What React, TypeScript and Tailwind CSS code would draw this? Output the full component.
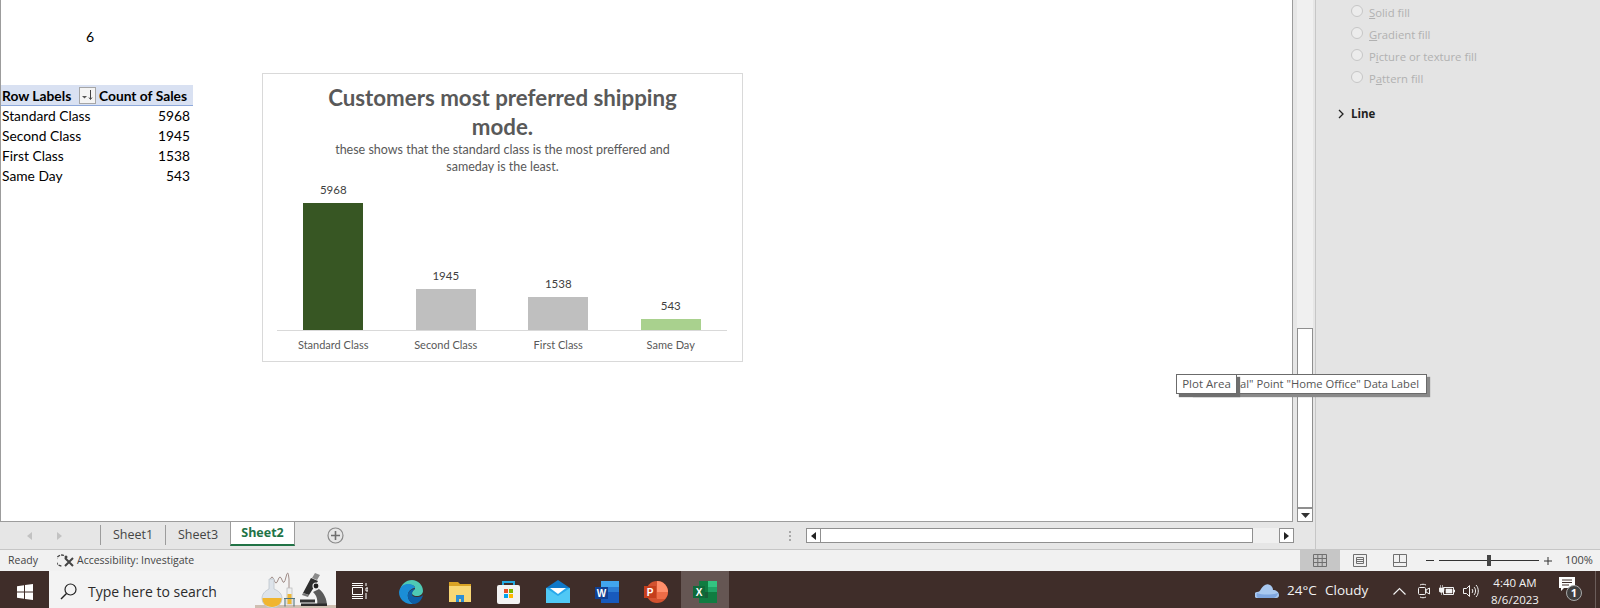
import React from "react";

const cell = "font-['Lato',sans-serif]";
const seg = "font-['Open_Sans',sans-serif]";

const rows: [string, string][] = [
  ["Standard Class", "5968"],
  ["Second Class", "1945"],
  ["First Class", "1538"],
  ["Same Day", "543"],
];

const bars = [
  { label: "Standard Class", value: "5968", h: "h-[127px]", c: "bg-[#375623]" },
  { label: "Second Class", value: "1945", h: "h-[41px]", c: "bg-[#bfbfbf]" },
  { label: "First Class", value: "1538", h: "h-[33px]", c: "bg-[#bfbfbf]" },
  { label: "Same Day", value: "543", h: "h-[11px]", c: "bg-[#a9d18e]" },
];

function PivotTable() {
  return (
    <div className={`${cell} w-[192px] whitespace-nowrap text-[13.800px] leading-[20px] text-black`}>
      <div className="flex h-[21px] items-center justify-between border-b border-[#8ea9db] bg-[#d9e1f2] pl-[1px] pr-[6px] pt-[1px] font-bold">
        <span>Row Labels</span>
        <span className="flex items-center gap-[3px]">
          <span className="-mt-[1px] flex h-[17px] w-[17px] items-center justify-center border border-[#a6a6a6] bg-[#f4f4f4]">
            <svg width="13" height="11" viewBox="0 0 13 11">
              <path d="M1 6h5l-2.500 2.500z" fill="#555" />
              <path d="M9.500 0v9M8 7.500l1.500 2 1.500-2" stroke="#444" fill="none" />
            </svg>
          </span>
          <span>Count of Sales</span>
        </span>
      </div>
      {rows.map(([a, b]) => (
        <div key={a} className="flex h-[20px] items-center justify-between pl-[1px] pr-[3px]">
          <span>{a}</span>
          <span>{b}</span>
        </div>
      ))}
    </div>
  );
}

function Chart() {
  return (
    <div className={`${cell} ml-[69px] mt-[36px] flex h-[289px] w-[481px] flex-col border border-[#d9d9d9] bg-white text-[#595959]`}>
      <div className="mt-[9px] px-[50px] text-center text-[22.300px] font-bold leading-[29px] text-[#595959]">
        Customers most preferred shipping mode.
      </div>
      <div className="px-[60px] text-center text-[12.500px] leading-[17px]">
        these shows that the standard class is the most preffered and sameday is the least.
      </div>
      <div className="ml-[14px] mr-[15px] mt-[10px] flex h-[146px] items-end border-b border-[#d9d9d9]">
        {bars.map((b) => (
          <div key={b.label} className="flex flex-1 flex-col items-center">
            <span className="mb-[6px] text-[11.500px] leading-[14px] text-[#404040]">{b.value}</span>
            <div className={`w-[60px] ${b.h} ${b.c}`} />
          </div>
        ))}
      </div>
      <div className="ml-[14px] mr-[15px] mt-[6px] flex">
        {bars.map((b) => (
          <div key={b.label} className="flex-1 text-center text-[11px] leading-[16px]">
            {b.label}
          </div>
        ))}
      </div>
    </div>
  );
}

function Radio({ label, u, pre = "" }: { label: string; u: string; pre?: string }) {
  return (
    <div className="flex h-[22px] items-center">
      <span className="-mt-[4px] h-[12px] w-[12px] rounded-full border border-[#c6c6c6] bg-[#ececec]" />
      <span className="ml-[6px] text-[11.300px] text-[#b1b1b1]">
        {pre}
        <span className="underline">{u}</span>
        {label}
      </span>
    </div>
  );
}

function Pane() {
  return (
    <div className={`${seg} w-[284px] shrink-0 bg-[#e4e4e4] pl-[35px]`}>
      <div className="pt-[2px]">
        <Radio u="S" label="olid fill" />
        <Radio u="G" label="radient fill" />
        <Radio pre="P" u="i" label="cture or texture fill" />
        <Radio pre="P" u="a" label="ttern fill" />
      </div>
      <div className="-ml-[13px] mt-[14px] flex h-[20px] items-center gap-[6px] text-[11.500px] font-bold text-[#1f1f1f]">
        <svg width="7" height="10" viewBox="0 0 7 10">
          <path d="M1 1l4 4-4 4" stroke="#222" strokeWidth="1.300" fill="none" />
        </svg>
        Line
      </div>
    </div>
  );
}

function ScrollV() {
  return (
    <div className="flex w-[23px] shrink-0 flex-col border-r border-[#c6c6c6] bg-[#e6e6e6] pl-[4px]">
      <div className="flex h-full w-[16px] flex-col bg-[#f0f0f0]">
        <div className="h-[328px]" />
        <div className="h-[180px] border border-[#8f8f8f] bg-white" />
        <div className="flex h-[14px] items-center justify-center border border-[#8f8f8f] bg-white">
          <svg width="9" height="5" viewBox="0 0 9 5"><path d="M0 0h9L4.500 5z" fill="#333" /></svg>
        </div>
      </div>
    </div>
  );
}

function TabBar() {
  return (
    <div className={`${seg} flex h-[27px] shrink-0 items-center border-r border-[#c6c6c6] bg-[#e6e6e6]`}>
      <div className="flex w-[100px] shrink-0 items-center gap-[25px] pl-[27px]">
        <svg width="5" height="8" viewBox="0 0 5 8"><path d="M5 0v8L0 4z" fill="#c2c2c2" /></svg>
        <svg width="5" height="8" viewBox="0 0 5 8"><path d="M0 0v8l5-4z" fill="#c2c2c2" /></svg>
      </div>
      <div className="flex h-full items-stretch text-[12.500px] text-[#444]">
        <div className="mb-[4px] mt-[3px] flex w-[65px] items-center justify-center border-l border-[#9c9c9c]">Sheet1</div>
        <div className="mb-[4px] mt-[3px] flex w-[65px] items-center justify-center border-l border-[#9c9c9c]">Sheet3</div>
        <div className="mb-[3px] flex w-[65px] items-center justify-center border-x border-b-2 border-x-[#9c9c9c] border-b-[#217346] bg-white font-bold text-[#217346]">
          Sheet2
        </div>
      </div>
      <svg className="ml-[32px]" width="17" height="17" viewBox="0 0 17 17">
        <circle cx="8.500" cy="8.500" r="7.500" fill="none" stroke="#8a8a8a" strokeWidth="1.200" />
        <path d="M8.500 4v9M4 8.500h9" stroke="#6e6e6e" strokeWidth="1.600" />
      </svg>
      <div className="ml-[445px] flex h-[10px] w-[2px] flex-col justify-between">
        <span className="h-[2px] bg-[#a8a8a8]" /><span className="h-[2px] bg-[#a8a8a8]" /><span className="h-[2px] bg-[#a8a8a8]" />
      </div>
      <div className="ml-[15px] flex h-[15px] w-[488px] items-stretch bg-[#f0f0f0]">
        <div className="flex w-[15px] items-center justify-center border border-[#8f8f8f] bg-white">
          <svg width="5" height="8" viewBox="0 0 5 8"><path d="M5 0v8L0 4z" fill="#222" /></svg>
        </div>
        <div className="w-[432px] border-y border-r border-[#8f8f8f] bg-white" />
        <div className="flex-1" />
        <div className="flex w-[15px] items-center justify-center border border-[#8f8f8f] bg-white">
          <svg width="5" height="8" viewBox="0 0 5 8"><path d="M0 0v8l5-4z" fill="#222" /></svg>
        </div>
      </div>
    </div>
  );
}

function StatusBar() {
  return (
    <div className={`${seg} flex h-[22px] shrink-0 items-center border-t border-[#c6c6c6] bg-[#f1f1f1] text-[10.500px] text-[#444]`}>
      <span className="ml-[8px] w-[49px]">Ready</span>
      <svg width="18" height="16" viewBox="0 0 18 16">
        <path d="M7 2.500A5.500 5.500 0 1 0 4.500 13" fill="none" stroke="#444" strokeWidth="1.300" strokeDasharray="3 1" />
        <path d="M8 5l8 8M16 5l-8 8" stroke="#444" strokeWidth="2" />
        <circle cx="9" cy="4" r="1.500" fill="#444" />
      </svg>
      <span className="ml-[2px]">Accessibility: Investigate</span>
      <div className="ml-auto flex h-full items-stretch">
        <div className="flex w-[40px] items-center justify-center bg-[#c6c6c6]">
          <svg width="14" height="13" viewBox="0 0 14 13">
            <path d="M.5.500h13v12H.5zM.5 4.500h13M.5 8.500h13M4.800.500v12M9.200.500v12" fill="none" stroke="#6f6f6f" />
          </svg>
        </div>
        <div className="flex w-[40px] items-center justify-center">
          <svg width="14" height="13" viewBox="0 0 14 13">
            <path d="M.5.500h13v12H.5zM3.500 3.500h7v6h-7zM3.500 5.500h7M3.500 7.500h7" fill="none" stroke="#6f6f6f" />
          </svg>
        </div>
        <div className="flex w-[40px] items-center justify-center">
          <svg width="14" height="13" viewBox="0 0 14 13">
            <path d="M.5.500h13v12H.5zM.5 8.500h6V.500M6.500 8.500h7" fill="none" stroke="#6f6f6f" />
          </svg>
        </div>
      </div>
      <div className="ml-[6px] h-[1px] w-[8px] bg-[#333]" />
      <div className="relative ml-[5px] h-[1px] w-[100px] bg-[#333]">
        <div className="absolute -top-[5px] left-[48px] h-[11px] w-[4px] bg-[#444]" />
      </div>
      <svg className="ml-[5px]" width="8" height="8" viewBox="0 0 8 8"><path d="M0 4h8M4 0v8" stroke="#333" /></svg>
      <span className="ml-[13px] mr-[8px] w-[27px] text-[11px]">100%</span>
    </div>
  );
}

function Flask() {
  return (
    <svg width="81" height="37" viewBox="0 1 81 37">
      <rect x="0" y="35" width="81" height="3" fill="#cfbfb2" />
      <path d="M15 10q2-6 4 0t4 0 4 0 4-3 3 2v10" fill="none" stroke="#a08d88" strokeWidth="1" />
      <path d="M14 9h5v10c5 2 8 5 8 9.500a10 9.500 0 0 1-20 0c0-4.500 3-7.500 7-9.500z" fill="#dde3ea" stroke="#bcc4cc" strokeWidth="0.800" />
      <path d="M7.500 28h19c.5 5-3.500 9-9.500 9s-10-4-9.500-9z" fill="#f0b52f" />
      <rect x="32" y="18" width="5" height="16" fill="#eef0f1" stroke="#b8b8b8" strokeWidth="0.700" />
      <rect x="32.500" y="24" width="4" height="10" fill="#eeb735" />
      <path d="M29 28.500h11M30 28.500v8M39 28.500v8" stroke="#54757c" strokeWidth="1.100" fill="none" />
      <path d="M60 3l5 2-3 5-5-2z" fill="#8a8a8a" />
      <path d="M56 8l7 3-9 14-6-2z" fill="#2e2e2e" />
      <path d="M48 23l6 2-1 2-6-2z" fill="#777" />
      <path d="M64 19c5 4 8 10 8 17h-10c1-6 0-10-4-14z" fill="#5a5a5a" />
      <circle cx="61" cy="16" r="3" fill="#1f1f1f" stroke="#e8e8e8" strokeWidth="1.200" />
      <rect x="45" y="29.500" width="15" height="3" fill="#333" />
      <rect x="46" y="33.500" width="26" height="2.500" fill="#2b2b2b" />
    </svg>
  );
}

function TaskIcons() {
  return (
    <div className="flex h-full shrink-0 items-center">
      <div className="flex w-[47px] justify-center pt-[3px]">
        <svg width="16" height="16" viewBox="0 0 16 16">
          <path d="M0 .500h11M0 15.500h11M.500 4.500h10v7H.500zM14 0v3M14 5h2v3h-2zM14 10v6M0 2.500h11M0 13.500h11" fill="none" stroke="#fff" strokeWidth="1" />
        </svg>
      </div>
      <div className="ml-[16px] flex items-center gap-[25px] pt-[4px]">
        <svg width="24" height="24" viewBox="0 0 24 24">
          <path d="M1 11C2 4 7 0 13 0c6 0 11 5 11 11 0 3-3 5-6 5-4 0-5-2-5-3 0-3 3-3 3-5 0-2-3-4-7-3-5 1-8 3-8 6z" fill="#4fc9b4" />
          <path d="M0 12C1 6 5 4 9 4c4 0 7 2 7 4-1 0-6 1-7 6-1 4 2 9 6 10-8 1-15-4-15-12z" fill="#1b8ed6" />
          <path d="M9 14c1-4 5-5 7-5-2 2-3 3-3 5 0 3 4 3 6 3 2 0 4-1 5-2-1 5-5 9-9 9-4-1-7-6-6-10z" fill="#0d5fa8" />
        </svg>
        <svg className="ml-[1px]" width="22" height="22" viewBox="0 0 22 22">
          <path d="M0 1h9l2 2h11v18H0z" fill="#d9a224" />
          <path d="M0 5h22v16H0z" fill="#f8d775" />
          <path d="M7 21v-7h8v7h-3v-3h-2v3z" fill="#2c8ed6" />
        </svg>
        <svg className="ml-[1px]" width="23" height="24" viewBox="0 0 23 24">
          <path d="M6 6V2h11v4" fill="none" stroke="#24a9e0" strokeWidth="2" />
          <rect y="5" width="23" height="19" rx="2" fill="#f3f3f3" />
          <rect x="7" y="9" width="4" height="4" fill="#e8502a" />
          <rect x="12" y="9" width="4" height="4" fill="#7fba00" />
          <rect x="7" y="14" width="4" height="4" fill="#00a4ef" />
          <rect x="12" y="14" width="4" height="4" fill="#ffb900" />
        </svg>
        <svg className="ml-[1px]" width="24" height="23" viewBox="0 0 24 23">
          <path d="M0 8l12-8 12 8v15H0z" fill="#0f78c8" />
          <path d="M0 8h24v15H0z" fill="#28a8ea" />
          <path d="M4 8h16l-8 6z" fill="#fff" />
          <path d="M0 8l12 8 12-8v15H0z" fill="#50c8f5" />
        </svg>
        <svg width="24" height="22" viewBox="0 0 24 22">
          <rect x="6" width="18" height="22" fill="#185abd" />
          <rect x="6" width="18" height="6" fill="#41a5ee" />
          <rect x="6" y="6" width="18" height="5" fill="#2b7cd3" />
          <rect y="6" width="13" height="12" fill="#103f91" />
          <text x="6.500" y="16" textAnchor="middle" fontSize="10" fontWeight="700" fill="#fff" fontFamily="Liberation Sans">W</text>
        </svg>
        <svg width="24" height="22" viewBox="0 0 24 22">
          <circle cx="13" cy="11" r="11" fill="#d35230" />
          <path d="M13 0a11 11 0 0 1 11 11H13z" fill="#ff8f6b" />
          <path d="M13 11h11a11 11 0 0 1-3 7H13z" fill="#ed6c47" />
          <rect y="5" width="12" height="12" fill="#c43e1c" />
          <text x="6" y="15" textAnchor="middle" fontSize="10" fontWeight="700" fill="#fff" fontFamily="Liberation Sans">P</text>
        </svg>
      </div>
      <div className="ml-[13px] flex h-full w-[48px] items-center justify-center bg-[#655653] pt-[4px]">
        <svg width="24" height="22" viewBox="0 0 24 22">
          <rect x="6" width="18" height="22" fill="#107c41" />
          <rect x="15" width="9" height="6" fill="#33c481" />
          <rect x="15" y="6" width="9" height="5" fill="#21a366" />
          <rect x="6" y="11" width="9" height="6" fill="#185c37" />
          <rect y="5" width="12" height="12" fill="#0f6a3a" />
          <text x="6" y="15" textAnchor="middle" fontSize="10" fontWeight="700" fill="#fff" fontFamily="Liberation Sans">X</text>
        </svg>
      </div>
    </div>
  );
}

function Tray() {
  return (
    <div className="ml-auto flex h-full shrink-0 items-center whitespace-nowrap pt-[2px] text-[#f2f2f2]">
      <svg width="24" height="15" viewBox="0 0 24 15">
        <path d="M3 15a3 3 0 0 1-1-6c2 0 3-1 4-3 2-3 5-6 9-4 2 1 3 3 3 5 3 0 6 2 6 5s-2 3-4 3z" fill="#a9c8f0" />
        <path d="M2 10c5 2 15 2 21 0-1 4-3 5-5 5H4c-2 0-3-2-2-5z" fill="#7fa6e0" />
      </svg>
      <span className="ml-[8px] w-[38px] text-[13.500px]">24°C</span>
      <span className="w-[43px] text-[13.500px]">Cloudy</span>
      <svg className="ml-[25px]" width="13" height="8" viewBox="0 0 13 8"><path d="M.500 7.500l6-6 6 6" stroke="#f2f2f2" strokeWidth="1.200" fill="none" /></svg>
      <svg className="ml-[12px]" width="12" height="16" viewBox="0 0 12 16">
        <rect x=".5" y="4.500" width="7" height="7" rx="1" fill="none" stroke="#f2f2f2" />
        <path d="M8 7l3.500-2v6L8 9zM2 2c2-1 4-1 6 0M2 14c2 1 4 1 6 0" fill="none" stroke="#f2f2f2" />
      </svg>
      <svg className="ml-[9px]" width="16" height="12" viewBox="0 0 16 12">
        <path d="M4.500 2.500h10v7h-10z" fill="none" stroke="#f2f2f2" />
        <path d="M7 4h6v4H7zM15 5h1v2h-1zM0 3h5v2a2.500 2.500 0 0 1-5 0zM1.500 0v3M3.500 0v3M2.500 7v3" fill="#f2f2f2" stroke="#f2f2f2" strokeWidth="0.600" />
      </svg>
      <svg className="ml-[8px]" width="16" height="14" viewBox="0 0 16 14">
        <path d="M.500 4.500h3l3-3v11l-3-3h-3zM9 5c1 1 1 3 0 4M11 3c2 2 2 6 0 8M13 1c3 3 3 9 0 12" fill="none" stroke="#f2f2f2" />
      </svg>
      <div className="ml-[6px] flex w-[60px] flex-col items-center text-[11.500px] leading-[17px]">
        <span>4:40 AM</span>
        <span>8/6/2023</span>
      </div>
      <div className="relative ml-[14px] mr-[12px] h-[28px] w-[24px]">
        <svg width="16" height="14" viewBox="0 0 16 14" className="absolute left-0 top-0">
          <path d="M0 0h16v11H5l-3 3v-3H0z" fill="#fff" />
          <path d="M3 3h10M3 5.500h10M3 8h7" stroke="#3f2d29" />
        </svg>
        <span className="absolute left-[7px] top-[8px] flex h-[16px] w-[16px] items-center justify-center rounded-full border border-[#aaa] bg-[#3f3f3f] text-[11px] font-bold leading-none text-white">1</span>
      </div>
      <div className="-mt-[2px] mr-[4px] h-[37px] w-[1px] bg-[#6b5d5a]" />
    </div>
  );
}

function Taskbar() {
  return (
    <div className={`${seg} flex h-[37px] shrink-0 items-stretch bg-[#3f2d29]`}>
      <div className="flex w-[49px] shrink-0 items-center justify-center pt-[4px]">
        <svg width="16" height="16" viewBox="0 0 16 16">
          <path d="M0 2.300l7-1v6.200H0zM8 1.100L16 0v7.500H8zM0 8.500h7v6.200l-7-1zM8 8.500h8V16l-8-1.100z" fill="#fff" />
        </svg>
      </div>
      <div className="relative flex w-[287px] shrink-0 items-center overflow-hidden bg-[#f3f3f3] pt-[3px]">
        <svg className="ml-[11px]" width="17" height="17" viewBox="0 0 17 17">
          <circle cx="10.500" cy="6.500" r="5.500" fill="none" stroke="#222" strokeWidth="1.200" />
          <path d="M6.500 10.500L1 16" stroke="#222" strokeWidth="1.400" />
        </svg>
        <span className="ml-[11px] text-[14px] text-[#2b2b2b]">Type here to search</span>
        <div className="absolute bottom-0 right-0 flex">
          <Flask />
        </div>
      </div>
      <TaskIcons />
      <Tray />
    </div>
  );
}

export default function App() {
  return (
    <div className="relative flex h-[608px] w-[1600px] flex-col overflow-hidden bg-white">
      <div className="flex h-[549px] shrink-0">
        <div className="flex w-[1316px] shrink-0 flex-col">
          <div className="flex min-h-0 flex-1">
            <div className="flex-1 border-x border-b border-[#9c9c9c] bg-white">
              <div className={`${cell} h-[85px] w-[93px] pt-[27px] text-right text-[14px] leading-[20px] text-black`}>6</div>
              <div className="-mt-[48px] flex items-start">
                <div className="mt-[48px]"><PivotTable /></div>
                <Chart />
              </div>
            </div>
            <ScrollV />
          </div>
          <TabBar />
        </div>
        <Pane />
      </div>
      <StatusBar />
      <Taskbar />
      <div className={`${seg} absolute left-[1190px] top-[374px] flex h-[20px] w-[237px] items-center justify-end whitespace-nowrap border border-[#6b6b6b] bg-white pr-[7px] text-[11.200px] text-[#555] shadow-[3px_3px_1px_#8a8a8a]`}>
        al" Point "Home Office" Data Label
      </div>
      <div className={`${seg} absolute left-[1176px] top-[374px] flex h-[20px] w-[61px] items-center justify-center whitespace-nowrap border border-[#6b6b6b] bg-white text-[11.500px] text-[#555] shadow-[3px_3px_1px_#6f6f6f]`}>
        Plot Area
      </div>
    </div>
  );
}
